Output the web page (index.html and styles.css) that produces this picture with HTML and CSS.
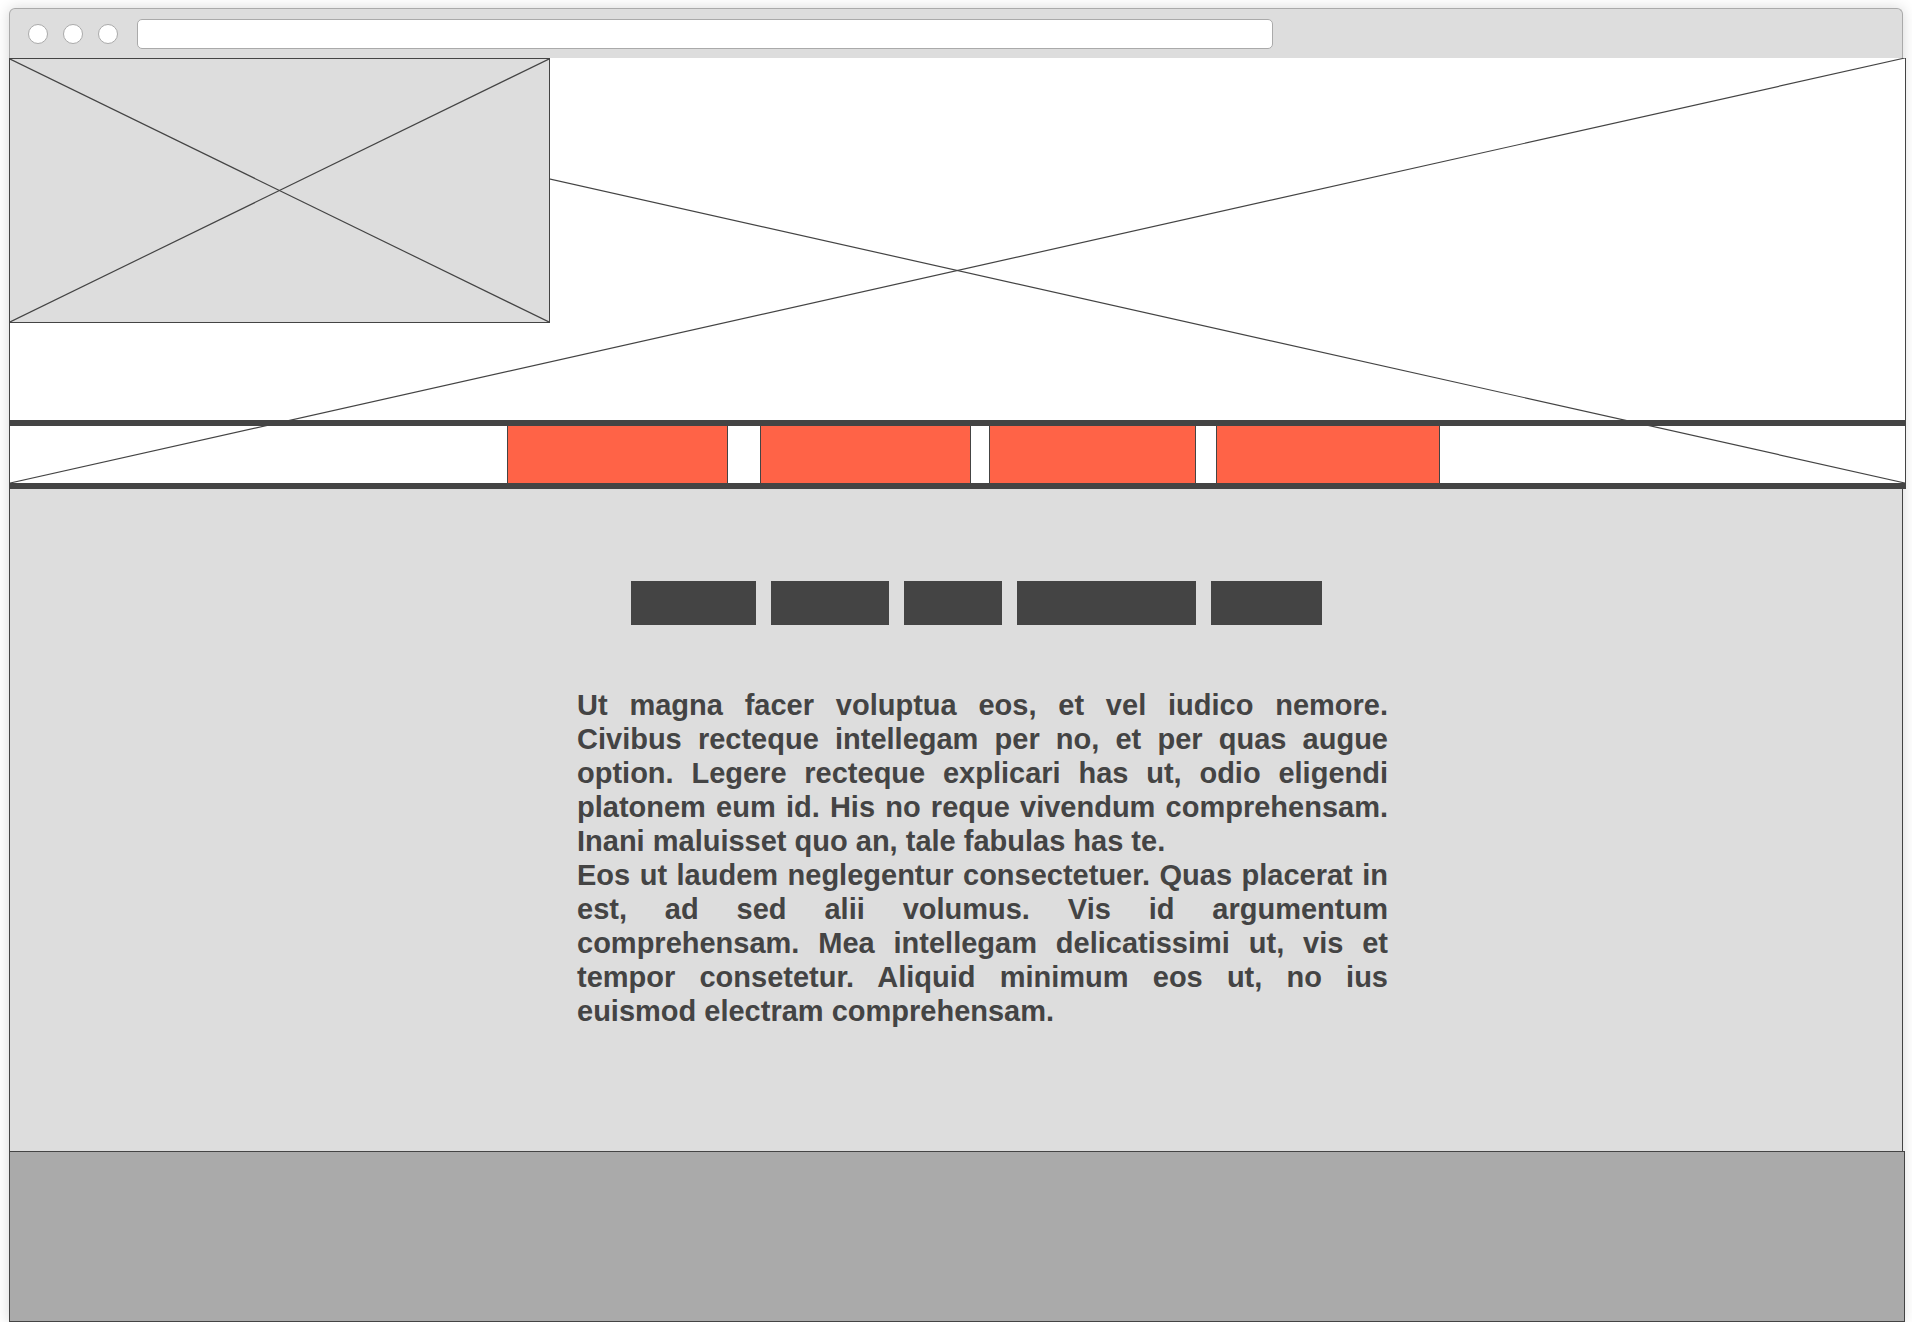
FILE: index.html
```html
<!DOCTYPE html>
<html lang="en">
<head>
    <meta charset="UTF-8">
    <meta name="viewport" content="width=device-width, initial-scale=1.0">
    <title>Wireframe</title>
    <link rel="stylesheet" href="styles.css">
</head>
<body>
    <div class="window">
        <div class="chrome">
            <span class="dot"></span>
            <span class="dot"></span>
            <span class="dot"></span>
            <div class="url"></div>
        </div>

        <div class="masthead">
            <svg class="cross" viewBox="0 0 100 100" preserveAspectRatio="none">
                <line x1="0" y1="0" x2="100" y2="100"/>
                <line x1="100" y1="0" x2="0" y2="100"/>
            </svg>
            <div class="hero">
                <div class="logo">
                    <svg class="cross" viewBox="0 0 100 100" preserveAspectRatio="none">
                        <line x1="0" y1="0" x2="100" y2="100"/>
                        <line x1="100" y1="0" x2="0" y2="100"/>
                    </svg>
                </div>
            </div>
            <nav class="nav">
                <a class="nav-item one"></a>
                <a class="nav-item two"></a>
                <a class="nav-item three"></a>
                <a class="nav-item four"></a>
            </nav>
        </div>

        <div class="content">
            <div class="tags">
                <span class="tag w1"></span>
                <span class="tag w2"></span>
                <span class="tag w3"></span>
                <span class="tag w4"></span>
                <span class="tag w5"></span>
            </div>
            <div class="text">
                <p>Ut magna facer voluptua eos, et vel iudico nemore. Civibus recteque intellegam per no, et per quas augue option. Legere recteque explicari has ut, odio eligendi platonem eum id. His no reque vivendum comprehensam. Inani maluisset quo an, tale fabulas has te.</p>
                <p>Eos ut laudem neglegentur consectetuer. Quas placerat in est, ad sed alii volumus. Vis id argumentum comprehensam. Mea intellegam delicatissimi ut, vis et tempor consetetur. Aliquid minimum eos ut, no ius euismod electram comprehensam.</p>
            </div>
        </div>

        <div class="footer"></div>
    </div>
</body>
</html>
```

FILE: styles.css
```css
body {
    margin: 0;
    padding: 0;
    background-color: #fff;
    font-family: "Liberation Sans", Arial, sans-serif;
}
.window {
    width: 1894px;
    margin: 8px 0 0 9px;
    box-shadow: 0 0 14px rgba(0, 0, 0, 0.16);
    border-radius: 6px 6px 0 0;
}
.chrome {
    height: 49px;
    display: flex;
    align-items: center;
    padding-left: 18px;
    background-color: #ddd;
    border: 1px solid #aaa;
    border-bottom: 1px solid #444;
    border-radius: 6px 6px 0 0;
}
.dot {
    width: 18px;
    height: 18px;
    border: 1px solid #aaa;
    border-radius: 50%;
    background-color: #fff;
    margin-right: 15px;
}
.url {
    width: 1134px;
    height: 28px;
    margin-left: 4px;
    border: 1px solid #aaa;
    border-radius: 5px;
    background-color: #fff;
}
.cross {
    position: absolute;
    top: 0;
    left: 0;
    width: 100%;
    height: 100%;
}
.cross line {
    stroke: #444;
    stroke-width: 1.2;
    vector-effect: non-scaling-stroke;
}
.masthead {
    position: relative;
    margin-right: -3px;
    background-color: #fff;
    border-left: 1px solid #444;
    border-right: 1px solid #444;
    border-bottom: 6px solid #444;
}
.hero {
    position: relative;
    height: 362px;
}
.logo {
    position: relative;
    width: 539px;
    height: 263px;
    margin: -1px 0 0 -1px;
    background-color: #ddd;
    border: 1px solid #444;
}
.nav {
    position: relative;
    display: flex;
    height: 57px;
    padding-left: 497px;
    border-top: 6px solid #444;
}
.nav-item {
    display: block;
    background-color: #ff6347;
    border-left: 1px solid #444;
    border-right: 1px solid #444;
}
.nav-item.one { width: 219px; }
.nav-item.two { width: 209px; margin-left: 32px; }
.nav-item.three { width: 205px; margin-left: 18px; }
.nav-item.four { width: 222px; margin-left: 20px; }
.content {
    height: 662px;
    box-sizing: border-box;
    padding-top: 92px;
    background-color: #ddd;
    border-left: 1px solid #444;
    border-right: 1px solid #444;
}
.tags {
    display: flex;
    gap: 15px;
    padding-left: 621px;
}
.tag {
    height: 44px;
    background-color: #444;
}
.tag.w1 { width: 125px; }
.tag.w2 { width: 118px; }
.tag.w3 { width: 98px; }
.tag.w4 { width: 179px; }
.tag.w5 { width: 111px; }
.text {
    width: 811px;
    margin: 63px 0 0 567px;
    color: #444;
    font-size: 29px;
    font-weight: bold;
    line-height: 34px;
    text-align: justify;
}
.text p {
    margin: 0;
}
.footer {
    height: 171px;
    box-sizing: border-box;
    margin-right: -2px;
    background-color: #aaa;
    border: 1px solid #444;
}
```
